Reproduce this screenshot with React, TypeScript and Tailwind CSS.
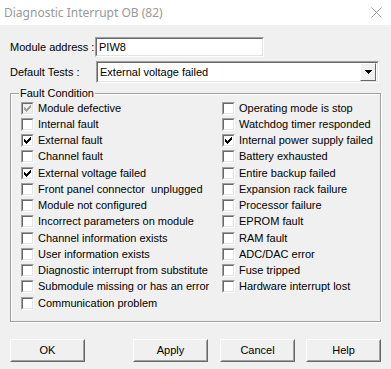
import React from "react";

const font = { fontFamily: '"Liberation Sans", Arial, sans-serif' };

function Check({ checked, disabled }: { checked?: boolean; disabled?: boolean }) {
  const cols = [2, 3, 4, 3, 2, 1, 0];
  const d = cols.map((s, i) => `M${3 + i} ${3 + s}h1v3h-1z`).join("");
  return (
    <div
      className={`relative w-[13px] h-[13px] shrink-0 border border-t-[#a0a0a0] border-l-[#a0a0a0] border-b-white border-r-white ${
        disabled ? "bg-[#f0f0f0]" : "bg-white"
      }`}
    >
      <div className="absolute inset-0 border border-t-[#696969] border-l-[#696969] border-b-[#e3e3e3] border-r-[#e3e3e3]" />
      {checked && (
        <svg className="absolute left-[-1px] top-[-1px]" width="13" height="13" viewBox="0 0 13 13" shapeRendering="crispEdges">
          <path d={d} fill={disabled ? "#a0a0a0" : "#000"} />
        </svg>
      )}
    </div>
  );
}

function Row({ label, checked, disabled }: { label: string; checked?: boolean; disabled?: boolean }) {
  return (
    <div className="flex items-center h-[16.25px] gap-[4px]">
      <Check checked={checked} disabled={disabled} />
      <span className="whitespace-pre leading-none">{label}</span>
    </div>
  );
}

function Btn({ label }: { label: string }) {
  return (
    <div className="w-[75px] h-[23px] border border-t-white border-l-white border-b-[#696969] border-r-[#696969] bg-[#f0f0f0]">
      <div className="w-full h-full flex items-center justify-center border border-t-[#f0f0f0] border-l-[#f0f0f0] border-b-[#a0a0a0] border-r-[#a0a0a0]">
        {label}
      </div>
    </div>
  );
}

function Sunken({ className, children }: { className: string; children?: React.ReactNode }) {
  return (
    <div className={`border border-t-[#a0a0a0] border-l-[#a0a0a0] border-b-white border-r-white ${className}`}>
      <div className="w-full h-full border border-t-[#696969] border-l-[#696969] border-b-[#e3e3e3] border-r-[#e3e3e3] bg-white flex items-center">
        {children}
      </div>
    </div>
  );
}

export default function App() {
  const left: [string, boolean?, boolean?][] = [
    ["Module defective", true, true],
    ["Internal fault"],
    ["External fault", true],
    ["Channel fault"],
    ["External voltage failed", true],
    ["Front panel connector  unplugged"],
    ["Module not configured"],
    ["Incorrect parameters on module"],
    ["Channel information exists"],
    ["User information exists"],
    ["Diagnostic interrupt from substitute"],
    ["Submodule missing or has an error"],
    ["Communication problem"],
  ];
  const right: [string, boolean?][] = [
    ["Operating mode is stop"],
    ["Watchdog timer responded"],
    ["Internal power supply failed", true],
    ["Battery exhausted"],
    ["Entire backup failed"],
    ["Expansion rack failure"],
    ["Processor failure"],
    ["EPROM fault"],
    ["RAM fault"],
    ["ADC/DAC error"],
    ["Fuse tripped"],
    ["Hardware interrupt lost"],
  ];
  return (
    <div className="w-[391px] h-[369px] bg-[#f0f0f0] text-[11px] text-black overflow-hidden" style={font}>
      <div className="h-[25px] bg-white flex items-center justify-between pl-[4px] pr-[9px]">
        <span className="text-[12px] text-[#999999]" style={{ fontFamily: '"Noto Sans", sans-serif' }}>
          Diagnostic Interrupt OB (82)
        </span>
        <svg width="11" height="11" viewBox="0 0 11 11">
          <path d="M0.5 0.5L10.5 10.5M10.5 0.5L0.5 10.5" stroke="#9a9a9a" strokeWidth="1" />
        </svg>
      </div>
      <div className="flex items-center mt-[12px] pl-[10px]">
        <span className="w-[85px] whitespace-nowrap">Module address :</span>
        <Sunken className="w-[169px] h-[20px]">
          <span className="pl-[2px]">PIW8</span>
        </Sunken>
      </div>
      <div className="flex items-center mt-[4px] pl-[10px]">
        <span className="w-[86px] whitespace-nowrap">Default Tests :</span>
        <Sunken className="w-[283px] h-[22px]">
          <span className="pl-[2px] flex-1">External voltage failed</span>
          <div className="w-[16px] h-[18px] mr-[1px] border border-t-white border-l-white border-b-[#696969] border-r-[#696969] bg-[#f0f0f0] flex items-center justify-center">
            <svg width="7" height="4" viewBox="0 0 7 4" shapeRendering="crispEdges">
              <path d="M0 0h7v1h-1v1h-1v1h-1v1h-1v-1h-1v-1h-1v-1h-1z" fill="#000" />
            </svg>
          </div>
        </Sunken>
      </div>
      <fieldset className="mt-[4px] ml-[10px] w-[371px] h-[235px] border border-[#a0a0a0] shadow-[inset_1px_1px_0_#fff,1px_1px_0_#fff]">
        <legend className="ml-[8px] px-[1px] leading-[12px] bg-[#f0f0f0]">Fault Condition</legend>
        <div className="flex pl-[10px] pt-[1px]">
          <div className="w-[201px] flex flex-col">
            {left.map(([l, c, d]) => (
              <Row key={l} label={l} checked={c} disabled={d} />
            ))}
          </div>
          <div className="flex flex-col">
            {right.map(([l, c]) => (
              <Row key={l} label={l} checked={c} />
            ))}
          </div>
        </div>
      </fieldset>
      <div className="flex mt-[17px] pl-[10px]">
        <Btn label="OK" />
        <div className="ml-[48px]">
          <Btn label="Apply" />
        </div>
        <div className="ml-[12px]">
          <Btn label="Cancel" />
        </div>
        <div className="ml-[11px]">
          <Btn label="Help" />
        </div>
      </div>
    </div>
  );
}
